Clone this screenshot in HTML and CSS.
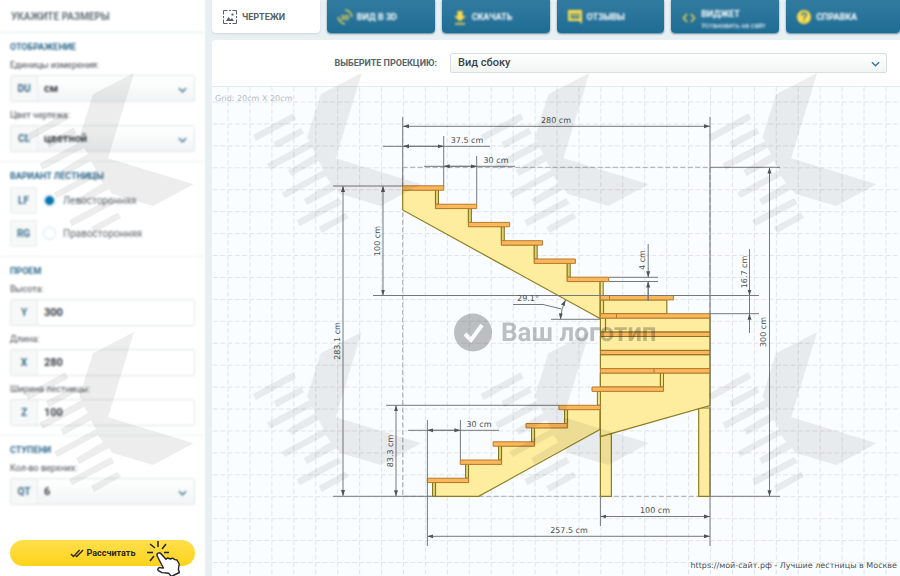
FILE: index.html
```html
<!DOCTYPE html>
<html lang="ru">
<head>
<meta charset="utf-8">
<meta name="viewport" content="width=device-width, initial-scale=1">
<title>Расчёт лестницы</title>
<link rel="stylesheet" href="styles.css">
</head>
<body>
<div class="app">
  <form class="sidebar">
    <div class="settings soft">
      <h1 class="settings-title">Укажите размеры</h1>
      <section class="group">
        <h2>Отображение</h2>
        <div class="field">
          <label for="unit">Единицы измерения:</label>
          <div class="control select"><span class="code">DU</span><select id="unit"><option>см</option></select><svg class="chevron" viewBox="0 0 10 6"><path d="M1 1l4 4 4-4"/></svg></div>
        </div>
        <div class="field">
          <label for="color">Цвет чертежа:</label>
          <div class="control select"><span class="code">CL</span><select id="color"><option>цветной</option></select><svg class="chevron" viewBox="0 0 10 6"><path d="M1 1l4 4 4-4"/></svg></div>
        </div>
      </section>
      <section class="group">
        <h2>Вариант лестницы</h2>
        <div class="choice"><span class="code">LF</span><input type="radio" name="side" id="left" checked><label for="left">Левосторонняя</label></div>
        <div class="choice"><span class="code">RG</span><input type="radio" name="side" id="right"><label for="right">Правосторонняя</label></div>
      </section>
      <section class="group">
        <h2>Проем</h2>
        <div class="field">
          <label for="height">Высота:</label>
          <div class="control"><span class="code">Y</span><input type="text" id="height" value="300"></div>
        </div>
        <div class="field">
          <label for="length">Длина:</label>
          <div class="control"><span class="code">X</span><input type="text" id="length" value="280"></div>
        </div>
        <div class="field">
          <label for="width">Ширина лестницы:</label>
          <div class="control"><span class="code">Z</span><input type="text" id="width" value="100"></div>
        </div>
      </section>
      <section class="group">
        <h2>Ступени</h2>
        <div class="field">
          <label for="steps">Кол-во верхних:</label>
          <div class="control select"><span class="code">QT</span><select id="steps"><option>6</option></select><svg class="chevron" viewBox="0 0 10 6"><path d="M1 1l4 4 4-4"/></svg></div>
        </div>
      </section>
    </div>
    <button type="button" class="calculate">
      <svg class="checks" viewBox="0 0 16 10"><path d="M1 5.5l3 3L11 1M6.5 7.5l1.2 1L15 1"/></svg>
      Рассчитать
      <svg class="pointer" viewBox="0 0 34 36">
        <path class="rays" d="M12 1v6M20 4l-4 5M4 4l5 4M1 12.500h6M18 12.500h5M8 16l-4 5"/>
        <path class="hand" d="M11.500 13.500c1.500-1.300 3.200-.3 4 .8l4.500 5 1.500-1.300 3 1 1.800-.8 2.700 1.400 2 .4 2.200 4-.8 5.500 1 3-8 4-2.800-3.300-6.600-.6-3.600-1.900c-1.500-1.500.2-3.600 2.500-3l2.500.3-6-11.500c-.6-1.200-.6-2.200.1-3z"/>
      </svg>
    </button>
  </form>

  <main class="main">
    <nav class="tabs">
      <a class="tab active" href="#drawings"><svg class="icon" viewBox="0 0 16 16"><path class="line" d="M1.500 5.500v-4h4M7 1.500h2M10.500 1.500h4v4M14.500 7v2M14.500 10.500v4h-4M9 14.500H7M5.500 14.500h-4v-4M1.500 9V7"/><path class="fill" d="M4 12l2.500-4 2 2.500L10 9l2 3z"/><path class="fill" d="M9.500 4.500h2v2h-2z"/></svg><span>Чертежи</span></a>
      <a class="tab" href="#view"><svg class="icon soft" viewBox="0 0 18 18"><path class="line" d="M1 9c1 4 3.500 7 8 8M9 1c4 .5 7 3.500 8 8"/><text x="4" y="12">3D</text></svg><span class="soft">Вид в 3D</span></a>
      <a class="tab download" href="#download"><svg class="icon soft" viewBox="0 0 16 16"><path d="M5.500 2h5v5H14l-6 5.500L2 7h3.500zM3 14h10v1.500H3z"/></svg><span class="soft">Скачать</span></a>
      <a class="tab" href="#reviews"><svg class="icon soft" viewBox="0 0 16 16"><path fill-rule="evenodd" d="M1 1h14v14l-3-3H1zM3.500 4h9V9.500h-9z"/><path d="M4 4.500h8v1H4zM4 6.500h8v1H4z"/></svg><span class="soft">Отзывы</span></a>
      <a class="tab" href="#widget"><svg class="icon soft" viewBox="0 0 16 16"><path class="line bold" d="M6 5L2.500 9 6 13M10 5l3.500 4L10 13"/></svg><span class="soft">Виджет<small>Установить на сайт</small></span></a>
      <a class="tab" href="#help"><svg class="icon soft" viewBox="0 0 16 16"><circle cx="8" cy="8" r="7"/><path class="mark" d="M5.700 6.500c.2-3.500 5-3 4.600-.3C10 7.800 8 7.800 8 9.800M8 11v1.500"/></svg><span class="soft">Справка</span></a>
    </nav>

    <section class="panel">
      <div class="projection">
        <label for="projection">Выберите проекцию:</label>
        <div class="projection-select"><select id="projection"><option>Вид сбоку</option></select><svg class="chevron" viewBox="0 0 10 6"><path d="M1 1l4 4 4-4"/></svg></div>
      </div>
      <svg class="drawing" viewBox="212 87 688 489" role="img" aria-label="Вид сбоку">
        <defs>
          <pattern id="grid" x="403" y="101.500" width="21.930" height="21.930" patternUnits="userSpaceOnUse">
            <path class="grid" d="M0 .5h21.930M.5 0v21.930"/>
          </pattern>
          <marker id="arrow" viewBox="0 0 6 4" refX="6" refY="2" markerWidth="6" markerHeight="5" markerUnits="userSpaceOnUse" orient="auto-start-reverse"><path d="M0 0l6 2-6 2z" fill="#505356"/></marker>
        </defs>
        <rect x="212" y="87" width="688" height="489" fill="url(#grid)"/>
        <rect class="frame" x="402.700" y="167.300" width="307.300" height="329"/>

        <g class="wood">
          <path d="M402.700 190h32.800v18.300h33v18.200h33v18.300h32.900v18.200h33v18.300h32.600v37.200L402.700 210z"/>
          <path d="M435.500 496.300v-14h33v-18.200h33v-18.200h33v-18.200h33v-18.200H600v20l-121.300 66.800z"/>
          <path d="M600.400 434h11v62.300h-11zM698.700 408H710v88.300h-11.300z"/>
          <path d="M600.400 373H710v32.500l-109.600 31.200z"/>
          <path d="M603.500 300h63.300v13.700h-63.300zM600.400 318H710v14H600.400zM605.500 318v14M600.400 336.500H710v14H600.400zM600.400 354.700H710v13.900H600.400zM600.400 373h60v14h-60z"/>
        </g>
        <g class="riser">
          <path d="M435.500 190h3v14.300h-3zM468.400 208.500h3v14h-3zM501.300 226.700h3V241h-3zM534.200 245h3v14h-3zM567.200 263.200h3v14h-3z"/>
          <path d="M432.500 482.500h3v13.800h-3zM465.500 464.300h3v14h-3zM498.500 446h3v14h-3zM531.500 427.800h3v14h-3zM564.500 409.600h3v14h-3z"/>
          <path class="light" d="M600.200 281.500h3v14h-3zM600.400 300h3v13.700h-3zM660.500 373h3v14h-3zM597.400 391.500h3v13.700h-3z"/>
        </g>
        <g class="tread">
          <path d="M402.700 185.800h41.100v4.400h-41.100zM435.600 204.200h41.100v4.400h-41.100zM468.500 222.400h41.100v4.400h-41.100zM501.400 240.700h41.100v4.400h-41.100zM534.300 259h41.100v4.400h-41.100zM567.200 277.200h41.400v4.400h-41.400z"/>
          <path d="M600.400 295.500h73v4.400h-73zM609.500 295.500v4.400M600.400 313.700H710v4.400H600.400zM616.500 313.700v4.400M600.400 368.600H710v4.400H600.400zM654 368.600v4.400"/>
          <path class="dark" d="M600.400 332.100H710v4.400H600.400zM600.400 350.300H710v4.400H600.400z"/>
          <path d="M592 387h71.500v4.400H592zM558.900 405.300h41.500v4.400h-41.500zM526 423.500h41.200v4.400H526zM493.100 441.800h41.200v4.400h-41.200zM460.200 460h41.200v4.400h-41.200zM427.300 478.200h41.200v4.400h-41.200z"/>
        </g>

        <g class="dim">
          <path d="M402.700 117v69M710 117v429M383 146.300h107M443.700 136v50M424 166.300h91M476.700 156v48M333 186h70M373 295.500h386M609 277.300h49M609 281.500h49M710 313.700h49M710 167.300h70M710 496.300h70M386 405.300h173M333 496.300h102M427.400 420v126M460.400 420v40M408 430.300h91M600.400 496v30M513 304.500h30l18.500 4.500M551 319.300h49M648.200 281v20M749.500 295v18.700"/>
          <path class="both" d="M403 126.300h307"/><path class="both" d="M403 146.300h40.700"/><path class="both" d="M443.700 166.300h33"/>
          <path class="both" d="M343 186v310"/><path class="both" d="M383 186v109.500"/><path class="both" d="M769.500 167.500v328.800"/>
          <path class="both" d="M396 405.300v91"/><path class="both" d="M427.400 430.300h33"/><path class="both" d="M600.400 516.500H710"/><path class="both" d="M427.400 536.300H710"/>
          <path class="both" d="M565.500 300q-4.500 9-5 19.300"/>
          <path class="end" d="M648.200 244v33.300"/><path class="end" d="M648.200 301v-19.500"/><path class="end" d="M749.500 249v46.500"/><path class="end" d="M749.500 333v-19.300"/>
        </g>
        <g class="size">
          <text x="556" y="123">280 cm</text><text x="467" y="143">37.5 cm</text><text x="496" y="163">30 cm</text>
          <text x="528" y="301">29.1°</text><text x="479" y="427">30 cm</text><text x="655" y="513">100 cm</text><text x="569" y="533">257.5 cm</text>
          <text transform="translate(340 341) rotate(-90)">283.1 cm</text><text transform="translate(380 241) rotate(-90)">100 cm</text>
          <text transform="translate(645 260) rotate(-90)">4 cm</text><text transform="translate(747 272) rotate(-90)">16.7 cm</text>
          <text transform="translate(766 332) rotate(-90)">300 cm</text><text transform="translate(393 451) rotate(-90)">83.3 cm</text>
        </g>
        <text class="grid-note" x="215" y="101">Grid: 20cm X 20cm</text>
        <text class="credit" x="897" y="568">https://мой-сайт.рф - Лучшие лестницы в Москве</text>
        <g class="logo"><circle cx="473" cy="332.500" r="19"/><path d="M465 334l6 6 11-15"/><text x="501" y="341">Ваш логотип</text></g>
      </svg>
    </section>
  </main>
</div>

<svg class="watermark" aria-hidden="true">
  <defs>
    <pattern id="mark" x="14" y="60" width="227.700" height="259" patternUnits="userSpaceOnUse">
      <path transform="translate(120 13)" d="M0 0L-41 21.300-54.700 64.700-52 68-94.700 90.700-91.300 96.700-49.700 74.700-46 81-73.700 97.300-70.300 103-43 88-38 97-80 119.700-76.700 125-36 103-31 110-58 126.300-54.700 132-25 116-22 120.700 19 133 59.500 111.300-26 85.300ZM-108.700 62L-68.700 40.300-65.700 46.300-105.700 68ZM-88 69.300L-60.700 54.700-57.700 60.300-85 75.300ZM-65 147.300L-23 125-19.700 130.700-62 153.300ZM-43 154L-16.300 139.700-13 144.700-40 160Z"/>
    </pattern>
  </defs>
  <rect width="100%" height="100%" fill="url(#mark)"/>
</svg>
</body>
</html>
```

FILE: styles.css
```css
* { box-sizing: border-box; }
body {
  margin: 0;
  position: relative;
  background: #e8f0f4;
  color: #3c4247;
  font: 11px/14px Roboto, sans-serif;
}
h1, h2 { margin: 0; font-size: 9px; line-height: 14px; font-weight: 700; text-transform: uppercase; }
select, input, button { font: inherit; color: inherit; }
.soft { filter: blur(1px); }
.app { display: grid; grid-template-columns: 205px minmax(0, 1fr); gap: 7px; min-height: 100vh; }

.sidebar { display: flex; flex-direction: column; justify-content: space-between; padding-bottom: 10px; background: #fff; }
.settings-title { padding: 10px 11px 8px; color: #667078; border-bottom: 1px solid #dcebee; font-weight: 700; font-size: 10px; }
.group { padding: 7px 10px 9px; border-bottom: 1px solid #edf0f1; }
.group:last-child { border: 0; }
.group h2 { margin-bottom: 4px; color: #2d6a8c; }
.field + .field, .choice + .choice { margin-top: 6px; }
.field label { display: block; margin-bottom: 3px; font-size: 9px; color: #44494d; }
.control { position: relative; display: flex; height: 27px; border: 1px solid #e2e6e7; border-radius: 2px; background: #fff; }
.select { background: linear-gradient(#fff, #f2f5f5); }
.code { display: grid; place-items: center; flex: 0 0 27px; font-size: 10px; font-weight: 700; color: #3f7391; background: #f7f8f8; }
.control .code { border-right: 1px solid #e9ecec; }
.control select, .control input { flex: 1; min-width: 0; padding: 0 6px; border: 0; background: none; appearance: none; font-weight: 700; }
.chevron { position: absolute; right: 7px; top: 50%; width: 9px; height: 6px; margin-top: -2px; fill: none; stroke: #3c7595; stroke-width: 1.6; pointer-events: none; }
.choice { display: flex; align-items: center; }
.choice .code { height: 27px; border: 1px solid #e9ecec; border-radius: 2px; }
.choice input { width: 13px; height: 13px; margin: 0 7px 0 6px; appearance: none; border: 1px solid #c9e2ef; border-radius: 50%; background: #fff; }
.choice input:checked { background: radial-gradient(circle, #0876ae 4px, #fff 5px); }
.choice label { font-size: 10px; color: #60666b; }

.calculate { position: relative; display: flex; align-items: center; justify-content: center; gap: 3px; height: 26px; margin: 0 10px; padding: 0; border: 0; border-radius: 13px; background: linear-gradient(#ffdf4d, #ffd31a); color: #2b2611; font-size: 9px; font-weight: 700; }
.checks { width: 14px; height: 9px; fill: none; stroke: #2b2611; stroke-width: 1.500; }
.pointer { position: absolute; right: 15px; top: 0; width: 34px; height: 36px; }
.rays { fill: none; stroke: #222; stroke-width: 1.500; }
.hand { fill: #fff; stroke: #222; stroke-width: 1.400; stroke-linejoin: round; }

.main { display: flex; flex-direction: column; gap: 7px; }
.tabs { display: grid; grid-template-columns: repeat(5, 108fr) 114fr; gap: 7px; }
.tab { display: flex; align-items: center; gap: 4px; height: 33px; padding: 1px 10px 0; border-radius: 0 0 4px 4px; background: linear-gradient(#327ba0, #1f6c94); box-shadow: 0 1px 2px #5e879d; color: #fff; font-size: 9px; line-height: 9px; font-weight: 700; text-transform: uppercase; text-decoration: none; }
.tab small { display: block; margin: 3px 0 -6px; font-size: 7px; font-weight: 400; text-transform: none; white-space: nowrap; }
.active { background: #fff; color: #555f66; box-shadow: 0 1px 2px #cdd8dd; }
.icon { flex: 0 0 16px; height: 16px; fill: #ffdd4a; }
.icon text { font: 700 8px Roboto, sans-serif; }
.icon .line { fill: none; stroke: #f2d94f; stroke-width: 1.500; }
.icon .mark { fill: none; stroke: #2b7298; stroke-width: 1.500; }
.active .icon .line { stroke: #555f66; stroke-width: 1; }
.active .icon .fill { fill: #555f66; }

.panel { flex: 1; background: #f9fdff; border-radius: 4px 0 0; }
.projection { display: grid; grid-template-columns: 225px minmax(0, 1fr); align-items: center; gap: 13px; height: 47px; padding-right: 13px; background: #fff; border-bottom: 1px solid #e4ebee; border-radius: 4px 0 0; }
.projection label { text-align: right; font-size: 9px; font-weight: 700; text-transform: uppercase; color: #56646c; }
.projection-select { position: relative; }
.projection-select select { display: block; width: 100%; height: 20px; padding: 0 7px; appearance: none; border: 1px solid #d9dedf; border-radius: 2px; background: linear-gradient(#fff, #f2f5f5); font-weight: 500; }
.drawing { display: block; width: 100%; height: auto; text-rendering: geometricPrecision; }
.grid { fill: none; stroke: #e2e4e6; stroke-width: 1; stroke-dasharray: 5 2.300; }
.frame { fill: none; stroke: #a8abad; stroke-width: 1; stroke-dasharray: 5 2.500; }
.wood path { fill: #ffed9f; stroke: #8e7d20; stroke-width: 1.200; }
.riser path { fill: #dcd070; stroke: #83751b; stroke-width: 1; }
.riser .light { fill: #f3e48c; }
.tread path { fill: #fbb75b; stroke: #b97a2e; stroke-width: 1; }
.tread .dark { stroke: #8e7020; }
.dim path { fill: none; stroke: #76797c; stroke-width: 1; }
.both { marker-start: url(#arrow); }
.both, .end { marker-end: url(#arrow); }
.size text { text-anchor: middle; }
.size text, .credit, .grid-note { font: 8px "DejaVu Sans", sans-serif; fill: #4b4e50; }
.grid-note { fill: #b9bcbe; }
.credit { text-anchor: end; }
.logo { opacity: .28; }
.logo circle, .logo text { fill: #222; }
.logo text { font: 700 26px Roboto, sans-serif; }
.logo path { fill: none; stroke: #fff; stroke-width: 4; }
.watermark { position: absolute; inset: 0; width: 100%; height: 100%; pointer-events: none; fill: rgb(0 0 0 / 7%); }
```
